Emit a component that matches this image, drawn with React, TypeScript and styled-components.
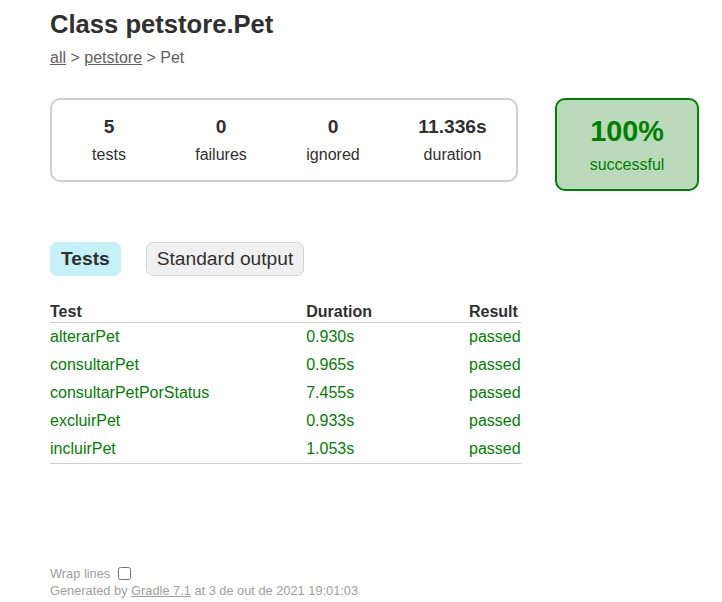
import React from "react";
import styled, { createGlobalStyle } from "styled-components";

const Global = createGlobalStyle`
  html, body {
    margin: 0;
    padding: 0;
    background: #ffffff;
  }
  body {
    font-family: "Liberation Sans", Arial, sans-serif;
    font-size: 16px;
    color: #303030;
  }
`;

const Content = styled.div`
  padding: 10px 50px 30px 50px;
`;

const Title = styled.h1`
  margin: 0;
  font-size: 25.6px;
  font-weight: bold;
  white-space: nowrap;
  color: #303030;
`;

const Breadcrumbs = styled.div`
  margin-top: 10px;
  color: #606060;
`;

const Crumb = styled.a`
  color: #606060;
  text-decoration: underline;
`;

const Summary = styled.div`
  margin-top: 31px;
  display: flex;
  align-items: flex-start;
`;

const SummaryGroup = styled.div`
  flex-shrink: 0;
  display: flex;
  gap: 2px;
  padding: 0 1px 0 2px;
  border: solid 2px #d0d0d0;
  border-radius: 10px;
`;

const InfoBox = styled.div<{ $w?: number }>`
  width: ${(p) => p.$w ?? 110}px;
  padding: 16px 0;
  text-align: center;
`;

const Counter = styled.div`
  font-size: 19.2px;
  font-weight: bold;
  margin-bottom: 8px;
`;

const Label = styled.p`
  margin: 0;
`;

const SuccessRate = styled.div`
  flex-shrink: 0;
  width: 140px;
  margin-left: 37px;
  padding: 15px 0;
  text-align: center;
  border: solid 2px #008000;
  border-radius: 10px;
  background-color: #bbd9bb;
  color: #008000;
`;

const Percent = styled.div`
  font-size: 28.8px;
  font-weight: bold;
  margin-bottom: 8px;
`;

const TabLinks = styled.ul`
  list-style: none;
  margin: 51px 0 0 0;
  padding: 0;
  display: flex;
  gap: 25px;
`;

const TabItem = styled.li<{ $selected?: boolean }>`
  padding: 5px 10px;
  border-radius: 7px;
  border: solid 1px ${(p) => (p.$selected ? "#c5f0f5" : "#d4d4d4")};
  background-color: ${(p) => (p.$selected ? "#c5f0f5" : "#f0f0f0")};
  font-size: 19.2px;
  font-weight: ${(p) => (p.$selected ? "bold" : "normal")};
  color: #303030;
`;

const Table = styled.table`
  margin-top: 26px;
  border-collapse: collapse;
  border-bottom: solid #d0d0d0 1px;
  min-width: 350px;
`;

const Th = styled.th`
  text-align: left;
  white-space: nowrap;
  padding: 1px 0 1px 97px;
  border-bottom: solid #d0d0d0 1px;
  &:first-child {
    padding-left: 0;
  }
`;

const Td = styled.td`
  white-space: nowrap;
  padding: 5px 0 5px 97px;
  color: #008000;
  &:first-child {
    padding-left: 0;
  }
`;

const Footer = styled.div`
  margin-top: 101px;
  font-size: 12.8px;
  color: #a0a0a0;
  white-space: nowrap;
`;

const WrapRow = styled.label`
  display: flex;
  align-items: center;
  height: 16px;
`;

const Checkbox = styled.input`
  margin: 0 0 0 8px;
  width: 13px;
  height: 13px;
`;

const Generated = styled.div`
  line-height: 15px;
  margin-top: 2px;
`;

const FooterLink = styled.a`
  color: #a0a0a0;
  text-decoration: underline;
`;

const tests = [
  { name: "alterarPet", duration: "0.930s" },
  { name: "consultarPet", duration: "0.965s" },
  { name: "consultarPetPorStatus", duration: "7.455s" },
  { name: "excluirPet", duration: "0.933s" },
  { name: "incluirPet", duration: "1.053s" },
];

export default function App() {
  return (
    <>
      <Global />
      <Content>
        <Title>Class petstore.Pet</Title>
        <Breadcrumbs>
          <Crumb href="#">all</Crumb> &gt; <Crumb href="#">petstore</Crumb> &gt; Pet
        </Breadcrumbs>
        <Summary>
          <SummaryGroup>
            <InfoBox>
              <Counter>5</Counter>
              <Label>tests</Label>
            </InfoBox>
            <InfoBox>
              <Counter>0</Counter>
              <Label>failures</Label>
            </InfoBox>
            <InfoBox>
              <Counter>0</Counter>
              <Label>ignored</Label>
            </InfoBox>
            <InfoBox $w={125}>
              <Counter>11.336s</Counter>
              <Label>duration</Label>
            </InfoBox>
          </SummaryGroup>
          <SuccessRate>
            <Percent>100%</Percent>
            <Label>successful</Label>
          </SuccessRate>
        </Summary>
        <TabLinks>
          <TabItem $selected>Tests</TabItem>
          <TabItem>Standard output</TabItem>
        </TabLinks>
        <Table>
          <thead>
            <tr>
              <Th>Test</Th>
              <Th>Duration</Th>
              <Th>Result</Th>
            </tr>
          </thead>
          <tbody>
            {tests.map((t) => (
              <tr key={t.name}>
                <Td>{t.name}</Td>
                <Td>{t.duration}</Td>
                <Td>passed</Td>
              </tr>
            ))}
          </tbody>
        </Table>
        <Footer>
          <WrapRow>
            Wrap lines
            <Checkbox type="checkbox" />
          </WrapRow>
          <Generated>
            Generated by <FooterLink href="#">Gradle 7.1</FooterLink> at 3 de out de 2021 19:01:03
          </Generated>
        </Footer>
      </Content>
    </>
  );
}
